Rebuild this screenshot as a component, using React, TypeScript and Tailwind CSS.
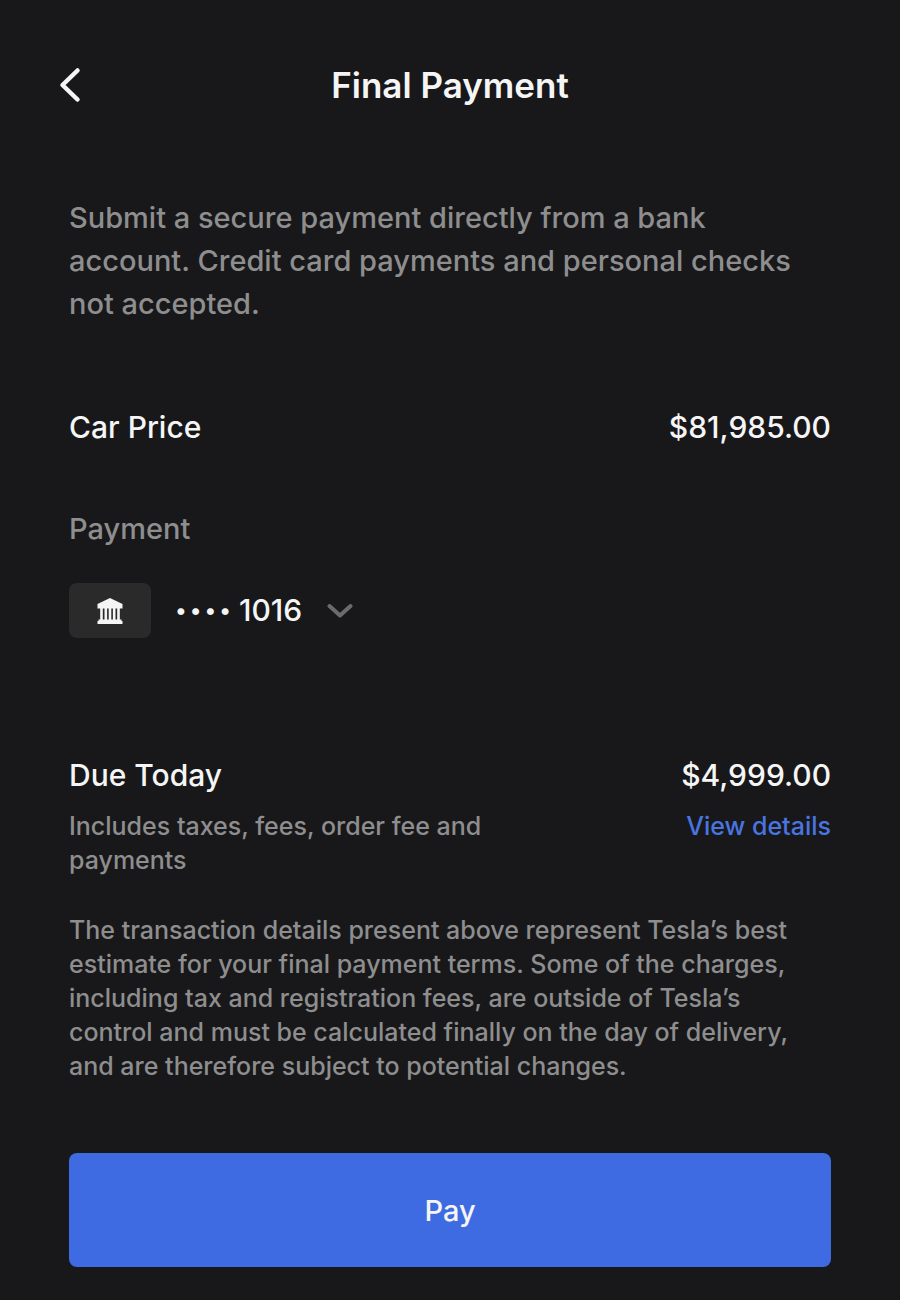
import React, { useState } from 'react';

type BankAccount = { id: string; lastFour: string };

const accounts: BankAccount[] = [{ id: 'bank-1016', lastFour: '1016' }];

const BackIcon: React.FC = () => (
  <svg viewBox="0 0 22 36" className="h-9 w-[22px]" fill="none" stroke="currentColor" strokeWidth="4.5" strokeLinecap="round" strokeLinejoin="round" aria-hidden="true">
    <path d="M18.500 3.500 3.500 18l15 14.500" />
  </svg>
);

const BankIcon: React.FC = () => (
  <svg viewBox="0 0 26 26" className="size-[26px]" fill="currentColor" aria-hidden="true">
    <path d="M13 0 25.500 6v4.500H0.500V6z" />
    <path d="M3.200 10h2.600v12H3.200zM7.500 10h2.600v12H7.500zM11.700 10h2.600v12h-2.600zM15.900 10h2.600v12h-2.600zM20.200 10h2.600v12h-2.600z" />
    <path d="M1.500 21.500h23v1.500h1v3h-25v-3h1z" />
  </svg>
);

const ChevronIcon: React.FC = () => (
  <svg viewBox="0 0 26 16" className="pointer-events-none absolute right-0 h-4 w-[26px] text-[#6b6b6c]" fill="none" stroke="currentColor" strokeWidth="4" strokeLinecap="round" strokeLinejoin="round" aria-hidden="true">
    <path d="M2.500 3 13 12.500 23.500 3" />
  </svg>
);

export default function App() {
  const [account, setAccount] = useState(accounts[0].id);

  return (
    <div className="min-h-screen bg-[#18181a] font-['Inter',sans-serif] font-medium text-[#f5f5f5]">
      <header className="grid grid-cols-[1fr_auto_1fr] items-center px-[59px] pt-[61px]">
        <button type="button" aria-label="Back" className="justify-self-start"><BackIcon /></button>
        <h1 className="text-[35px]/12 font-semibold">Final Payment</h1>
      </header>

      <main className="px-[69px] pt-[87px] pb-8">
        <p className="pr-3 text-[29px]/[43px] text-[#8e8e8f]">
          Submit a secure payment directly from a bank account. Credit card payments and personal checks not accepted.
        </p>

        <dl className="mt-[81px] flex justify-between text-3xl/[43px]">
          <dt>Car Price</dt>
          <dd>$81,985.00</dd>
        </dl>

        <section className="mt-[58px]">
          <label htmlFor="account" className="block text-[29px]/[43px] text-[#8e8e8f]">Payment</label>
          <div className="mt-[33px] flex items-center gap-6">
            <span className="flex h-[55px] w-[82px] items-center justify-center rounded-lg bg-[#2a2a2b]"><BankIcon /></span>
            <div className="relative flex items-center gap-2">
              <span className="flex gap-[3px] text-[22px]" aria-hidden="true">
                <span>•</span><span>•</span><span>•</span><span>•</span>
              </span>
              <select id="account" value={account} onChange={(event) => setAccount(event.target.value)} className="appearance-none bg-transparent pr-[50px] text-3xl/[43px] outline-none">
                {accounts.map((item) => <option key={item.id} value={item.id}>{item.lastFour}</option>)}
              </select>
              <ChevronIcon />
            </div>
          </div>
        </section>

        <section className="mt-[116px]">
          <dl className="flex justify-between text-3xl/[43px]">
            <dt>Due Today</dt>
            <dd>$4,999.00</dd>
          </dl>
          <div className="mt-3 flex items-start justify-between text-[25px]/[34px]">
            <p className="w-[430px] text-[#8e8e8f]">Includes taxes, fees, order fee and payments</p>
            <a href="#details" className="text-[#4a74e0]">View details</a>
          </div>
          <p className="mt-9 pr-3 text-[25px]/[34px] text-[#8e8e8f]">
            The transaction details present above represent Tesla’s best estimate for your final payment terms. Some of the charges, including tax and registration fees, are outside of Tesla’s control and must be calculated finally on the day of delivery, and are therefore subject to potential changes.
          </p>
        </section>

        <button type="button" className="mt-[70px] h-[114px] w-full rounded-lg bg-[#3f6be2] text-[29px]/[43px]">Pay</button>
      </main>
    </div>
  );
}
